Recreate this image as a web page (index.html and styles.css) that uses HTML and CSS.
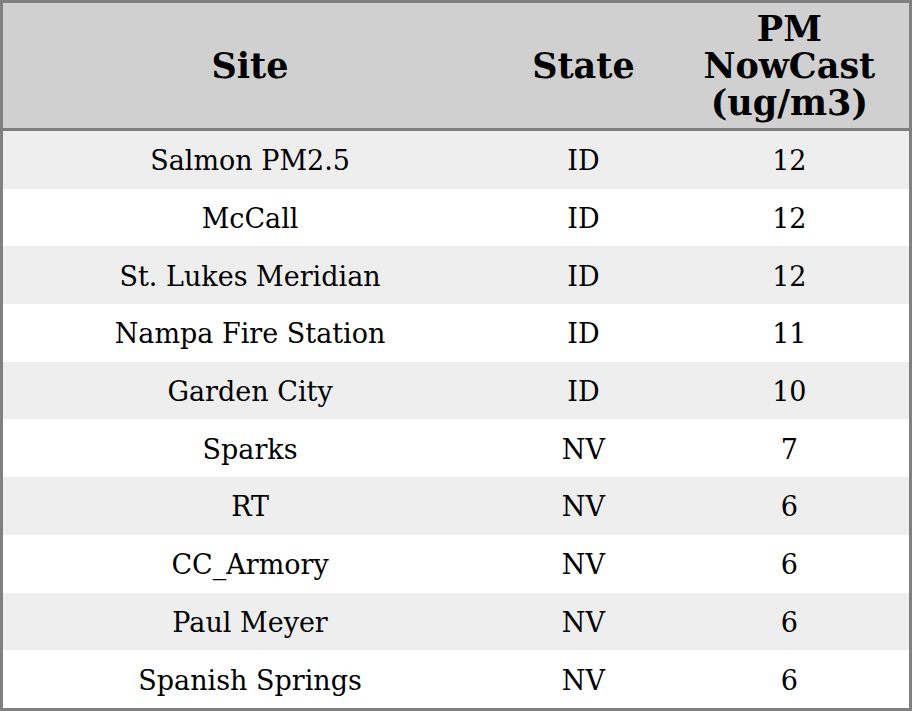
FILE: index.html
```html
<!DOCTYPE html>
<html>
<head>
<meta charset="utf-8">
<link rel="stylesheet" href="styles.css">
</head>
<body>
<table class="data">
  <colgroup>
    <col class="c-site">
    <col class="c-state">
    <col class="c-pm">
  </colgroup>
  <thead>
    <tr class="head">
      <th>Site</th>
      <th>State</th>
      <th>PM<br>NowCast<br>(ug/m3)</th>
    </tr>
  </thead>
  <tbody>
    <tr><td>Salmon PM2.5</td><td>ID</td><td>12</td></tr>
    <tr><td>McCall</td><td>ID</td><td>12</td></tr>
    <tr><td>St. Lukes Meridian</td><td>ID</td><td>12</td></tr>
    <tr><td>Nampa Fire Station</td><td>ID</td><td>11</td></tr>
    <tr><td>Garden City</td><td>ID</td><td>10</td></tr>
    <tr><td>Sparks</td><td>NV</td><td>7</td></tr>
    <tr><td>RT</td><td>NV</td><td>6</td></tr>
    <tr><td>CC_Armory</td><td>NV</td><td>6</td></tr>
    <tr><td>Paul Meyer</td><td>NV</td><td>6</td></tr>
    <tr><td>Spanish Springs</td><td>NV</td><td>6</td></tr>
  </tbody>
</table>
</body>
</html>
```
FILE: styles.css
```css
html, body {
  margin: 0;
  padding: 0;
  background: #ffffff;
}
.data {
  width: 912px;
  height: 711px;
  border-collapse: collapse;
  border: 3px solid #808080;
  font-family: "DejaVu Serif", serif;
  color: #000;
  table-layout: fixed;
}
.c-site { width: 494px; }
.c-state { width: 172px; }
.c-pm { width: 240px; }
.head th {
  background: #d0d0d0;
  font-size: 35px;
  font-weight: bold;
  line-height: 37px;
  height: 111px;
  padding: 7px 0;
  text-align: center;
  vertical-align: middle;
  border-bottom: 3px solid #808080;
}
.data td {
  font-size: 27px;
  text-align: center;
  padding: 2px 0 0;
  height: 55px;
}
.data tbody tr:nth-child(odd) td {
  background: #eeeeee;
}
.data tbody tr:nth-child(even) td {
  background: #ffffff;
}
```
